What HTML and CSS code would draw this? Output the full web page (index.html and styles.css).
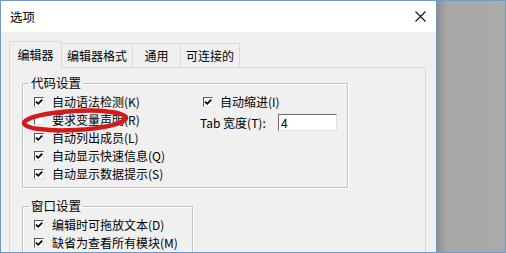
FILE: index.html
```html
<!DOCTYPE html>
<html lang="zh-CN">
<head>
<meta charset="utf-8">
<title>选项</title>
<link rel="stylesheet" href="styles.css">
</head>
<body>
<div class="screen">
  <div class="dialog">
    <div class="titlebar">
      <span class="title">选项</span>
      <svg class="close" width="11" height="11" viewBox="0 0 11 11"><path d="M0.5 0.5 L10.5 10.5 M10.5 0.5 L0.5 10.5" stroke="#111" stroke-width="1.1" fill="none"/></svg>
    </div>
    <div class="body">
      <div class="tabs">
        <div class="tab active">编辑器</div>
        <div class="tab w2">编辑器格式</div>
        <div class="tab w3">通用</div>
        <div class="tab w4">可连接的</div>
      </div>
      <div class="panel">
        <fieldset class="group code">
          <legend>代码设置</legend>
          <div class="inner cols">
            <div class="col left">
              <div class="cb checked"><span class="box"><svg viewBox="0 0 8 8"><path d="M1 3.6 L3.2 5.8 L7.2 1.6" /></svg></span>自动语法检测(K)</div>
              <div class="cb"><span class="box"></span>要求变量声明(R)</div>
              <div class="cb checked"><span class="box"><svg viewBox="0 0 8 8"><path d="M1 3.6 L3.2 5.8 L7.2 1.6" /></svg></span>自动列出成员(L)</div>
              <div class="cb checked"><span class="box"><svg viewBox="0 0 8 8"><path d="M1 3.6 L3.2 5.8 L7.2 1.6" /></svg></span>自动显示快速信息(Q)</div>
              <div class="cb checked"><span class="box"><svg viewBox="0 0 8 8"><path d="M1 3.6 L3.2 5.8 L7.2 1.6" /></svg></span>自动显示数据提示(S)</div>
            </div>
            <div class="col right">
              <div class="cb checked"><span class="box"><svg viewBox="0 0 8 8"><path d="M1 3.6 L3.2 5.8 L7.2 1.6" /></svg></span>自动缩进(I)</div>
              <div class="tabwidth"><span class="tlabel">Tab 宽度(T):</span><span class="input">4</span></div>
            </div>
          </div>
        </fieldset>
        <fieldset class="group window">
          <legend>窗口设置</legend>
          <div class="inner">
            <div class="cb checked"><span class="box"><svg viewBox="0 0 8 8"><path d="M1 3.6 L3.2 5.8 L7.2 1.6" /></svg></span>编辑时可拖放文本(D)</div>
            <div class="cb checked"><span class="box"><svg viewBox="0 0 8 8"><path d="M1 3.6 L3.2 5.8 L7.2 1.6" /></svg></span>缺省为查看所有模块(M)</div>
          </div>
        </fieldset>
      </div>
    </div>
  </div>
  <div class="desktop"></div>
  <svg class="annot" width="506" height="253" viewBox="0 0 506 253">
    <ellipse cx="75" cy="120.5" rx="51" ry="9.5" transform="rotate(-3 75 120.5)" fill="none" stroke="#d41a1a" stroke-width="4.5"/>
  </svg>
</div>
</body>
</html>
```
FILE: styles.css
```css
html, body {
  margin: 0;
  padding: 0;
}
body {
  width: 506px;
  height: 253px;
  overflow: hidden;
  font-family: "Noto Sans CJK SC", "Noto Sans", sans-serif;
  font-size: 12px;
  color: #000;
  background: #fff;
}
.screen {
  box-sizing: border-box;
  width: 506px;
  height: 253px;
  border: 1px solid #6f9bc8;
  display: flex;
  position: relative;
  overflow: hidden;
}
.dialog {
  width: 435px;
  flex: none;
  border-right: 1px solid #6f95b8;
  background: #f0f0f0;
  display: flex;
  flex-direction: column;
}
.titlebar {
  height: 31px;
  flex: none;
  background: #fff;
  display: flex;
  align-items: center;
  padding: 0 10px 0 9px;
}
.title {
  font-size: 12.5px;
  line-height: 16px;
}
.close {
  margin-left: auto;
  display: block;
}
.body {
  flex: 1;
  display: flex;
  flex-direction: column;
  padding: 9px 10px 0 8px;
}
.tabs {
  display: flex;
  align-items: flex-end;
  height: 26px;
  position: relative;
  z-index: 1;
}
.tab {
  box-sizing: border-box;
  height: 24px;
  border: 1px solid #d9d9d9;
  border-bottom: none;
  background: #f0f0f0;
  text-align: center;
  line-height: 22px;
  padding-top: 1px;
  margin-left: -1px;
}
.tab.active {
  width: 53px;
  height: 27px;
  margin-left: 0;
  margin-bottom: -1px;
  line-height: 22px;
  padding-top: 2px;
  background: #f0f0f0;
  position: relative;
  z-index: 2;
}
.tab.w2 { width: 72px; }
.tab.w3 { width: 49px; }
.tab.w4 { width: 60px; }
.panel {
  flex: 1;
  border: 1px solid #d9d9d9;
  background: #f0f0f0;
}
.group {
  margin: 7px 0 0 12px;
  padding: 0;
  box-sizing: border-box;
  border: 1px solid #c4c4c4;
  box-shadow: inset 1px 1px 0 #fff, 1px 1px 0 #fff;
  min-width: 0;
}
.group legend {
  margin-left: 6px;
  padding: 0 2px;
  line-height: 16px;
  font-size: 12.5px;
}
.group.code {
  width: 326px;
}
.group.window {
  width: 171px;
  margin-top: 10px;
}
.inner {
  padding: 2px 0 4px 11px;
}
.cols {
  display: flex;
}
.col.left {
  width: 169px;
}
.cb {
  display: flex;
  align-items: center;
  height: 18px;
  line-height: 18px;
  white-space: nowrap;
}
.box {
  box-sizing: border-box;
  width: 10px;
  height: 10px;
  flex: none;
  margin-right: 8px;
  background: #fff;
  border-top: 1px solid #555;
  border-left: 1px solid #555;
  border-right: 1px solid #e6e6e6;
  border-bottom: 1px solid #e6e6e6;
  display: flex;
  align-items: center;
  justify-content: center;
}
.box svg {
  width: 8px;
  height: 8px;
  display: block;
}
.box path {
  fill: none;
  stroke: #000;
  stroke-width: 1.8;
}
.col.right .box {
  margin-right: 7px;
}
.tabwidth {
  display: flex;
  align-items: center;
  margin-top: 3px;
  margin-left: -3px;
  height: 17px;
}
.tlabel {
  width: 78px;
}
.input {
  box-sizing: border-box;
  width: 59px;
  height: 17px;
  background: #fff;
  border-top: 1px solid #6a6a6a;
  border-left: 1px solid #6a6a6a;
  border-right: 1px solid #e0e0e0;
  border-bottom: 1px solid #e0e0e0;
  line-height: 15px;
  padding-left: 2px;
}
.desktop {
  flex: 1;
  background: linear-gradient(to right, #8f8f8f 0, #a8a8a8 10px, #aaaaaa 100%);
}
.annot {
  position: absolute;
  left: -1px;
  top: -1px;
  pointer-events: none;
}
```
